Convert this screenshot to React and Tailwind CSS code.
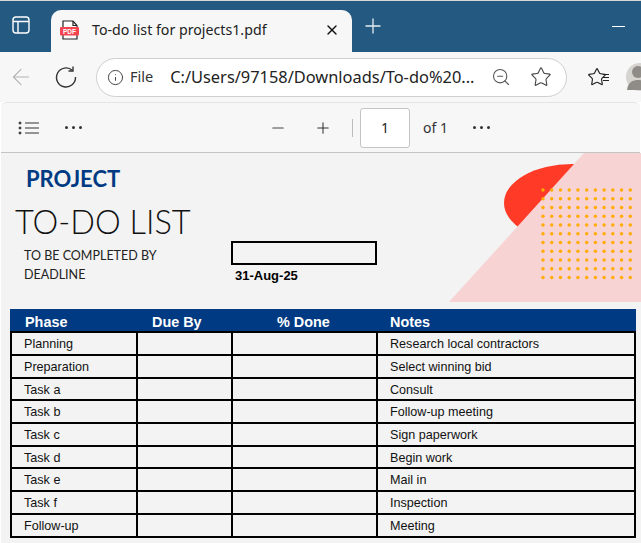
import { Star, ZoomOut, ArrowLeft, Info, Plus, Minus, X } from 'lucide-react';

const rows = [
  ['Planning', 'Research local contractors', 'h-[23px]'],
  ['Preparation', 'Select winning bid', 'h-[23px]'],
  ['Task a', 'Consult', 'h-[22px]'],
  ['Task b', 'Follow-up meeting', 'h-[23px]'],
  ['Task c', 'Sign paperwork', 'h-[23px]'],
  ['Task d', 'Begin work', 'h-[22px]'],
  ['Task e', 'Mail in', 'h-[23px]'],
  ['Task f', 'Inspection', 'h-[23px]'],
  ['Follow-up', 'Meeting', 'h-[23px]'],
];

const Dots = () => (
  <div className="flex items-center gap-[4px]">
    <span className="size-[3px] rounded-full bg-[#333]" />
    <span className="size-[3px] rounded-full bg-[#333]" />
    <span className="size-[3px] rounded-full bg-[#333]" />
  </div>
);

const PdfIcon = () => (
  <svg width="20" height="20" viewBox="0 0 20 20">
    <path d="M3 1h10l4 4.500V19H3z" fill="#fff" stroke="#222" strokeWidth="1.2" />
    <path d="M13 1v4.500h4" fill="none" stroke="#222" strokeWidth="1.2" />
    <rect x="0" y="7" width="19" height="8.500" rx="1" fill="#f4444f" />
    <text x="9.500" y="13.500" textAnchor="middle" fontSize="6.500" fontWeight="700" fill="#fff" fontFamily="Liberation Sans">PDF</text>
  </svg>
);

const Avatar = () => (
  <svg width="28" height="28" viewBox="0 0 28 28" className="ml-[17px] shrink-0">
    <circle cx="14" cy="14" r="14" fill="#d6d4d0" />
    <circle cx="12" cy="9" r="6" fill="#8f8c87" />
    <path d="M1 27c1-8 6-10 11-10s10 2 11 10z" fill="#8f8c87" />
  </svg>
);

const Decor = () => {
  const cols = Array.from({ length: 11 });
  const lines = Array.from({ length: 11 });
  return (
    <svg className="absolute right-0 top-0" width="200" height="150" viewBox="441 153 200 150">
      <ellipse cx="572" cy="203" rx="68" ry="39" fill="#ff3b27" />
      <path d="M449 302 L584 153 H641 V302 Z" fill="#f8d3d3" />
      {lines.map((_, r) =>
        cols.map((_, c) => (
          <circle key={`${r}-${c}`} cx={543 + c * 8.73} cy={190 + r * 8.75} r="1.7" fill="#ffab00" />
        ))
      )}
    </svg>
  );
};

const App = () => {
  return (
    <div className="h-[543px] w-[641px] overflow-hidden bg-white font-['Noto_Sans',sans-serif]">
      <div className="h-px bg-[#d8d8d8]" />
      {/* tab strip */}
      <div className="flex h-[51px] items-stretch bg-[#245a82]">
        <div className="flex w-[51px] items-center justify-center pb-[3px] pr-[9px]">
          <svg width="18" height="18" viewBox="0 0 18 18" fill="none" stroke="#fff" strokeWidth="1.4">
            <rect x="1" y="1" width="16" height="16" rx="3" />
            <path d="M1 5.500h16M6 5.500V17" />
          </svg>
        </div>
        <div className="mt-[9px] flex w-[301px] items-center rounded-t-[10px] bg-[#f7f7f7] pl-[9px] pr-[12px] pb-[2px]">
          <PdfIcon />
          <span className="ml-[12px] flex-1 text-[14.2px] text-[#222]">To-do list for projects1.pdf</span>
          <X size={16} strokeWidth={2} className="text-[#111]" />
        </div>
        <div className="flex w-[42px] items-center justify-center pb-[2px]">
          <Plus size={24} strokeWidth={1.3} className="text-[#e4edf3]" />
        </div>
        <div className="flex flex-1 justify-end pr-[16px] pt-[25px]">
          <div className="h-px w-[13px] bg-white" />
        </div>
      </div>
      {/* address bar */}
      <div className="flex h-[50px] items-center bg-[#f7f7f7]">
        <ArrowLeft size={26} strokeWidth={1} className="ml-[8px] shrink-0 text-[#b4b4b4]" />
        <svg width="22" height="22" viewBox="0 0 22 22" fill="none" stroke="#333" strokeWidth="1.4" className="ml-[21px] shrink-0">
          <path d="M17.500 4.500A9.500 9.500 0 1 0 20.500 11" />
          <path d="M18 0.500V5h-4.500" />
        </svg>
        <div className="ml-[19px] flex h-[39px] w-[471px] shrink-0 items-center rounded-full border border-[#cfcfcf] bg-white pl-[10px]">
          <Info size={17} strokeWidth={1.4} className="shrink-0 text-[#444]" />
          <span className="ml-[6px] text-[14.5px] text-[#333]">File</span>
          <span className="ml-[17px] w-[321px] shrink-0 text-[16.4px] whitespace-nowrap text-[#222]">C:/Users/97158/Downloads/To-do%20...</span>
          <ZoomOut size={20} strokeWidth={1.3} className="shrink-0 text-[#555]" />
          <Star size={22} strokeWidth={1.2} className="ml-[19px] shrink-0 text-[#444]" />
        </div>
        <div className="ml-[20px] flex shrink-0 items-center">
          <Star size={20} strokeWidth={1.4} className="text-[#222]" />
          <div className="-ml-[4px] flex flex-col gap-[2px]">
            <span className="h-px w-[6px] bg-[#222]" />
            <span className="h-px w-[6px] bg-[#222]" />
            <span className="h-px w-[6px] bg-[#222]" />
          </div>
        </div>
        <Avatar />
      </div>
      {/* pdf toolbar */}
      <div className="mx-px flex h-[51px] items-center rounded-t-[6px] border-t border-[#e4e4e4] border-b border-b-[#c4c4c4] bg-[#f7f7f7] pl-[17px]">
        <svg width="21" height="14" viewBox="0 0 21 14" stroke="#333" fill="#333">
          <path d="M7 2h14M7 7h14M7 12h14" strokeWidth="1.2" />
          <circle cx="2" cy="2" r="1" />
          <circle cx="2" cy="7" r="1" />
          <circle cx="2" cy="12" r="1" />
        </svg>
        <div className="ml-[26px]"><Dots /></div>
        <Minus size={18} strokeWidth={1.4} className="ml-[187px] text-[#444]" />
        <Plus size={18} strokeWidth={1.4} className="ml-[27px] text-[#333]" />
        <div className="ml-[20px] h-[18px] w-px bg-[#bcbcbc]" />
        <div className="ml-[7px] flex h-[40px] w-[50px] items-center justify-center rounded-[3px] border border-[#c4c4c4] bg-white text-[14px] text-[#222]">1</div>
        <span className="ml-[13px] text-[14px] text-[#333]">of 1</span>
        <div className="ml-[25px]"><Dots /></div>
      </div>
      {/* page */}
      <div className="relative ml-px h-[390px] bg-[#f3f3f3]">
        <Decor />
        <div className="relative">
          <div className="pl-[25px] pt-[12px] font-['Lato',sans-serif] text-[22px] leading-[27px] font-bold text-[#003a82]">PROJECT</div>
          <div className="pl-[14px] pt-[11px] font-['Lato',sans-serif] text-[32.5px] leading-[38px] font-light text-[#111]">TO-DO LIST</div>
          <div className="mt-[3px] flex">
            <div className="w-[230px] pl-[23px] pt-[2px] font-['Lato',sans-serif] text-[12.5px] leading-[19px] text-[#222]">
              <div>TO BE COMPLETED BY</div>
              <div>DEADLINE</div>
            </div>
            <div>
              <div className="-mt-[3px] h-[24px] w-[146px] border-2 border-black" />
              <div className="pl-[4px] pt-[2px] font-['Liberation_Sans',sans-serif] text-[13px] leading-[18px] font-bold text-black">31-Aug-25</div>
            </div>
          </div>
          {/* table */}
          <div className="ml-[9px] mt-[24px] w-[626px] font-['Liberation_Sans',sans-serif]">
            <div className="flex h-[22px] items-center bg-[#003a82] pt-[5px] text-[14.400px] font-bold text-white">
              <div className="w-[126px] pl-[15px]">Phase</div>
              <div className="w-[95px] pl-[16px]">Due By</div>
              <div className="w-[145px] pl-[46px]">% Done</div>
              <div className="pl-[14px]">Notes</div>
            </div>
            <div className="border-t-2 border-l-2 border-black">
              {rows.map(([phase, note, h]) => (
                <div key={phase} className={`flex border-b-2 border-black text-[12.6px] text-[#111] ${h}`}>
                  <div className="flex w-[126px] items-center border-r-2 border-black pl-[12px] pt-[2px]">{phase}</div>
                  <div className="w-[95px] border-r-2 border-black" />
                  <div className="w-[145px] border-r-2 border-black" />
                  <div className="flex flex-1 items-center border-r-2 border-black pl-[12px] pt-[2px]">{note}</div>
                </div>
              ))}
            </div>
          </div>
        </div>
      </div>
    </div>
  );
};

export default App;
